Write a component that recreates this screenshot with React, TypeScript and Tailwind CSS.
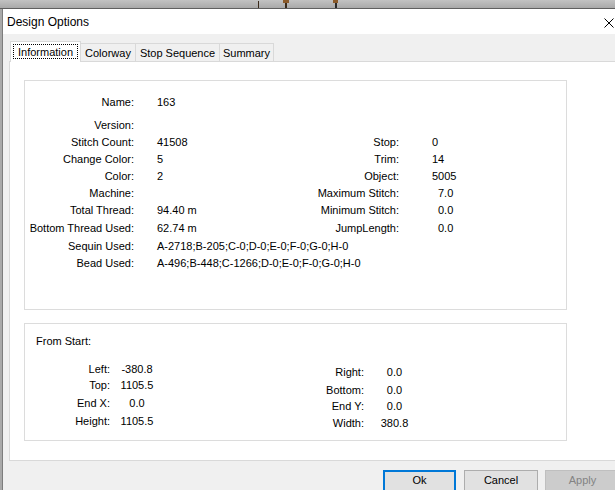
import React from "react";

type Row = { label: string; value?: string; rLabel?: string; rValue?: string; rDec?: boolean; h: string };

const rows1: Row[] = [
  { label: "Name:", value: "163", h: "h-[23px]" },
  { label: "Version:", value: "", h: "h-[17px]" },
  { label: "Stitch Count:", value: "41508", rLabel: "Stop:", rValue: "0", h: "h-[17px]" },
  { label: "Change Color:", value: "5", rLabel: "Trim:", rValue: "14", h: "h-[17px]" },
  { label: "Color:", value: "2", rLabel: "Object:", rValue: "5005", h: "h-[17px]" },
  { label: "Machine:", value: "", rLabel: "Maximum Stitch:", rValue: "7.0", rDec: true, h: "h-[17px]" },
  { label: "Total Thread:", value: "94.40 m", rLabel: "Minimum Stitch:", rValue: "0.0", rDec: true, h: "h-[18px]" },
  { label: "Bottom Thread Used:", value: "62.74 m", rLabel: "JumpLength:", rValue: "0.0", rDec: true, h: "h-[18px]" },
  { label: "Sequin Used:", value: "A-2718;B-205;C-0;D-0;E-0;F-0;G-0;H-0", h: "h-[17px]" },
  { label: "Bead Used:", value: "A-496;B-448;C-1266;D-0;E-0;F-0;G-0;H-0", h: "h-[17px]" },
];

const leftRows = [
  { label: "Left:", value: "-380.8", h: "h-[16px]" },
  { label: "Top:", value: "1105.5", h: "h-[18px]" },
  { label: "End X:", value: "0.0", h: "h-[18px]" },
  { label: "Height:", value: "1105.5", h: "h-[17px]" },
];

const rightRows = [
  { label: "Right:", value: "0.0", h: "h-[18px]" },
  { label: "Bottom:", value: "0.0", h: "h-[16px]" },
  { label: "End Y:", value: "0.0", h: "h-[17px]" },
  { label: "Width:", value: "380.8", h: "h-[17px]" },
];

export default function App() {
  return (
    <div className="w-[615px] h-[490px] overflow-hidden bg-[#f0f0f0] text-black text-[11px] font-['Liberation_Sans',Arial,sans-serif] flex flex-col">
      {/* background strip above the dialog */}
      <div className="relative h-[9px] shrink-0 bg-gradient-to-b from-[#c2c2c2] to-[#a9a9a9] border-b border-[#5f5f5f]">
        <span className="absolute left-[258px] top-[1px] w-[1px] h-[7px] bg-[#3a2a1a]" />
        <span className="absolute left-[283px] top-[0px] w-[6px] h-[3px] bg-[#8a5a2a]" />
        <span className="absolute left-[285px] top-[3px] w-[2px] h-[5px] bg-[#3a2a1a]" />
        <span className="absolute left-[333px] top-[0px] w-[5px] h-[3px] bg-[#8a5a2a]" />
        <span className="absolute left-[335px] top-[3px] w-[2px] h-[5px] bg-[#2a2a2a]" />
      </div>
      <div className="flex-1 border-l-2 border-[#a9a9a9]">
        <div className="h-full border-l border-[#7d7d7d] flex flex-col">
          {/* title bar */}
          <div className="h-[25px] shrink-0 bg-white flex items-center justify-between pl-[4px] pr-[1px]">
            <span className="text-[12px] leading-[16px]">Design Options</span>
            <svg width="10" height="10" viewBox="0 0 10 10" className="mb-[-2px]">
              <path d="M0.5 0.5 L9.5 9.5 M9.5 0.5 L0.5 9.5" stroke="#000" strokeWidth="1" fill="none" />
            </svg>
          </div>
          {/* tabs */}
          <div className="h-[27px] shrink-0 flex items-end pl-[7px]">
            <div className="relative z-10 -mb-[1px] h-[21px] w-[71px] bg-white border-l border-t border-r border-[#d9d9d9] pt-[2px] pl-[2px]">
              <div className="w-[65px] h-[15px] border border-dotted border-black text-center leading-[14px]">Information</div>
            </div>
            <div className="h-[18px] w-[55px] border-t border-r border-[#d9d9d9] flex items-center justify-center pt-[2px]">Colorway</div>
            <div className="h-[18px] w-[84px] border-t border-r border-[#d9d9d9] flex items-center justify-center pt-[2px]">Stop Sequence</div>
            <div className="h-[18px] w-[54px] border-t border-r border-[#d9d9d9] flex items-center justify-center pt-[2px]">Summary</div>
          </div>
          {/* tab page */}
          <div className="ml-[6px] w-[640px] h-[400px] shrink-0 bg-white border border-[#d9d9d9] pt-[18px] pl-[14px]">
            <div className="w-[543px] h-[230px] border border-[#dcdcdc] pt-[13px]">
              {rows1.map((r) => (
                <div key={r.label} className={`flex items-start leading-[17px] ${r.h}`}>
                  <div className="w-[109px] text-right">{r.label}</div>
                  <div className="ml-[23px] w-[120px] whitespace-nowrap">{r.value}</div>
                  <div className="w-[122px] text-right">{r.rLabel}</div>
                  {r.rValue !== undefined && (
                    <div className={r.rDec ? "ml-[39px]" : "ml-[33px]"}>{r.rValue}</div>
                  )}
                </div>
              ))}
            </div>
            <div className="mt-[13px] w-[543px] h-[118px] border border-[#dcdcdc] pt-[9px]">
              <div className="pl-[11px] leading-[17px]">From Start:</div>
              <div className="mt-[11px] flex items-start">
                <div className="flex flex-col">
                  {leftRows.map((r) => (
                    <div key={r.label} className={`flex leading-[17px] ${r.h}`}>
                      <div className="w-[85px] text-right">{r.label}</div>
                      <div className="w-[54px] text-center">{r.value}</div>
                    </div>
                  ))}
                </div>
                <div className="flex flex-col mt-[3px]">
                  {rightRows.map((r) => (
                    <div key={r.label} className={`flex leading-[17px] ${r.h}`}>
                      <div className="w-[200px] text-right">{r.label}</div>
                      <div className="w-[61px] text-center">{r.value}</div>
                    </div>
                  ))}
                </div>
              </div>
            </div>
          </div>
          {/* buttons */}
          <div className="mt-[9px] flex pl-[380px]">
            <div className="w-[73px] h-[23px] shrink-0 bg-[#e1e1e1] border-2 border-[#0078d7] flex items-center justify-center pb-[2px]">Ok</div>
            <div className="ml-[8px] w-[74px] h-[23px] shrink-0 bg-[#e1e1e1] border border-[#adadad] flex items-center justify-center pb-[2px]">Cancel</div>
            <div className="ml-[7px] w-[75px] h-[23px] shrink-0 bg-[#cccccc] border border-[#bfbfbf] text-[#838383] flex items-center justify-center pb-[2px]">Apply</div>
          </div>
        </div>
      </div>
    </div>
  );
}
